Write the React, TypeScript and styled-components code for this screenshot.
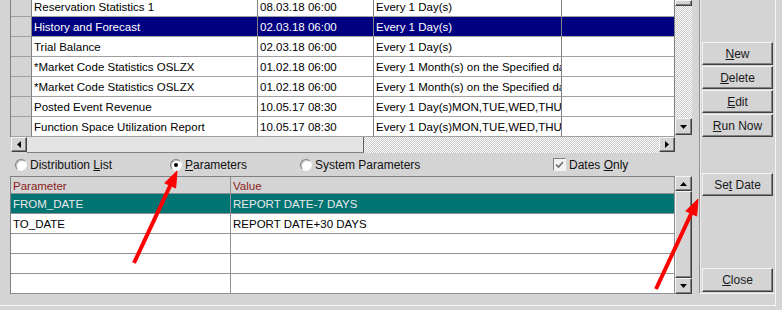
import React from "react";
import styled, { createGlobalStyle, css } from "styled-components";

const GlobalStyle = createGlobalStyle`
  html, body {
    margin: 0;
    padding: 0;
    background: #d4d4d4;
  }
  body {
    font-family: "Liberation Sans", Arial, sans-serif;
    font-size: 12px;
    color: #000;
  }
  * { box-sizing: border-box; }
`;

const raised = css`
  background: #d4d4d4;
  border: 1px solid;
  border-color: #f4f4f4 #404040 #404040 #f4f4f4;
  box-shadow: inset -1px -1px 0 #808080;
`;

const checker = css`
  background: repeating-conic-gradient(#ffffff 0 25%, #c8c8c8 0 50%) 0 0 / 2px 2px;
`;

const Window = styled.div`
  position: relative;
  width: 782px;
  height: 310px;
  overflow: hidden;
  background: #d4d4d4;
`;

const Frame = styled.div`
  display: flex;
  width: 776px;
  height: 306px;
  border-right: 1px solid #f4f4f4;
  border-bottom: 1px solid #f4f4f4;
`;

const Main = styled.div`
  width: 692px;
  padding-left: 10px;
  display: flex;
  flex-direction: column;
`;

const GridArea = styled.div<{ h: number }>`
  display: flex;
  height: ${(p) => p.h}px;
`;

const Rows = styled.div`
  width: 665px;
  height: 100%;
  overflow: hidden;
  border-left: 1px solid #808080;
`;

const RowList = styled.div`
  margin-top: -3px;
`;

const Row = styled.div<{ selected?: boolean }>`
  display: grid;
  grid-template-columns: 21px 226px 116px 188px 113px;
  height: 20px;
  background: ${(p) => (p.selected ? "#000080" : "#ffffff")};
  color: ${(p) => (p.selected ? "#ffffff" : "#000000")};
`;

const Cell = styled.div<{ head?: boolean }>`
  height: 20px;
  padding: 2px 0 0 2px;
  line-height: 17px;
  font-size: 11.5px;
  white-space: nowrap;
  overflow: hidden;
  border-bottom: 1px solid #a0a0a0;
  border-right: 1px solid #808080;
  ${(p) =>
    p.head &&
    css`
      background: #d4d4d4;
    `}
`;

const VScroll = styled.div<{ checkered?: boolean }>`
  width: 17px;
  display: flex;
  flex-direction: column;
  ${(p) => (p.checkered ? checker : "background: #d4d4d4;")}
`;

const Thumb = styled.div<{ h?: number }>`
  ${raised};
  ${(p) => (p.h ? `height: ${p.h}px; flex: none;` : "flex: 1;")}
`;

const Spacer = styled.div`
  flex: 1;
`;

const Gap = styled.div<{ h: number }>`
  height: ${(p) => p.h}px;
  flex: none;
  background: #d4d4d4;
`;

const ArrowBox = styled.div<{ w: number; h: number }>`
  ${raised};
  width: ${(p) => p.w}px;
  height: ${(p) => p.h}px;
  flex: none;
  display: flex;
  align-items: center;
  justify-content: center;
`;

type Dir = "up" | "down" | "left" | "right";

const tri: Record<Dir, string> = {
  up: "0,4 7,4 3.5,0",
  down: "0,0 7,0 3.5,4",
  left: "4,0 4,7 0,3.5",
  right: "0,0 0,7 4,3.5",
};

function ArrowBtn({ dir, w = 17, h = 17 }: { dir: Dir; w?: number; h?: number }) {
  const vertical = dir === "up" || dir === "down";
  return (
    <ArrowBox w={w} h={h}>
      <svg width={vertical ? 7 : 4} height={vertical ? 4 : 7}>
        <polygon points={tri[dir]} fill="#000" />
      </svg>
    </ArrowBox>
  );
}

const HScroll = styled.div`
  display: flex;
  width: 665px;
  height: 16px;
  padding-left: 1px;
`;

const HThumb = styled.div`
  width: 337px;
  background: #e4e4e4;
  border-bottom: 1px solid #808080;
  border-right: 1px solid #606060;
`;

const HTrack = styled.div`
  flex: 1;
  ${checker};
`;

const Options = styled.div`
  display: flex;
  align-items: center;
  height: 23px;
  padding-left: 5px;
`;

const Option = styled.label<{ w?: number }>`
  display: flex;
  align-items: center;
  gap: 3px;
  ${(p) => (p.w ? `width: ${p.w}px;` : "")}
  color: #111;
  white-space: nowrap;
`;

const Radio = styled.span<{ on?: boolean }>`
  width: 12px;
  height: 12px;
  border-radius: 50%;
  background: #ffffff;
  border: 1px solid;
  border-color: #808080 #f4f4f4 #f4f4f4 #808080;
  box-shadow: inset 1px 1px 0 #c0c0c0;
  display: flex;
  align-items: center;
  justify-content: center;
  &::after {
    content: "";
    width: 4px;
    height: 4px;
    border-radius: 50%;
    background: ${(p) => (p.on ? "#000" : "transparent")};
  }
`;

const Check = styled.span`
  width: 13px;
  height: 13px;
  background: #f2f2f2;
  border: 1px solid;
  border-color: #808080 #f4f4f4 #f4f4f4 #808080;
  display: flex;
  align-items: center;
  justify-content: center;
`;

const Table = styled.div`
  width: 665px;
  height: 100%;
  border-left: 1px solid #808080;
  border-top: 1px solid #808080;
  overflow: hidden;
`;

const ParamRow = styled.div<{ head?: boolean; selected?: boolean }>`
  display: grid;
  grid-template-columns: 220px 1fr;
  height: ${(p) => (p.head ? 17 : 20)}px;
  background: ${(p) => (p.head ? "#d4d4d4" : p.selected ? "#007373" : "#ffffff")};
  color: ${(p) => (p.head ? "#8b1c1c" : p.selected ? "#eaeaea" : "#000000")};
`;

const ParamCell = styled.div<{ head?: boolean }>`
  padding: ${(p) => (p.head ? "2px 0 0 2px" : "1px 0 0 2px")};
  line-height: ${(p) => (p.head ? 14 : 18)}px;
  font-size: 11.5px;
  white-space: nowrap;
  overflow: hidden;
  border-bottom: 1px solid #909090;
  border-right: 1px solid #909090;
`;

const SidePanel = styled.div`
  margin-left: 7px;
  width: 76px;
  height: 294px;
  border-left: 1px solid #909090;
  border-bottom: 1px solid #f4f4f4;
  box-shadow: inset 1px 0 0 #ececec;
  padding: 42px 0 1px 2px;
  display: flex;
  flex-direction: column;
  gap: 1px;
`;

const Button = styled.button<{ h?: number; mt?: number | "auto" }>`
  ${raised};
  width: 71px;
  height: ${(p) => p.h ?? 23}px;
  flex: none;
  margin-top: ${(p) => (p.mt === "auto" ? "auto" : `${p.mt ?? 0}px`)};
  padding: 0;
  font-family: "Liberation Sans", Arial, sans-serif;
  font-size: 12px;
  color: #1a1a1a;
  text-align: center;
`;

const Overlay = styled.svg`
  position: absolute;
  top: 0;
  left: 0;
  pointer-events: none;
`;

const reports = [
  ["Reservation Statistics 1", "08.03.18 06:00", "Every 1 Day(s)"],
  ["History and Forecast", "02.03.18 06:00", "Every 1 Day(s)"],
  ["Trial Balance", "02.03.18 06:00", "Every 1 Day(s)"],
  ["*Market Code Statistics OSLZX", "01.02.18 06:00", "Every 1 Month(s) on the Specified day"],
  ["*Market Code Statistics OSLZX", "01.02.18 06:00", "Every 1 Month(s) on the Specified day"],
  ["Posted Event Revenue", "10.05.17 08:30", "Every 1 Day(s)MON,TUE,WED,THU,FRI"],
  ["Function Space Utilization Report", "10.05.17 08:30", "Every 1 Day(s)MON,TUE,WED,THU,FRI"],
];

const params = [
  ["FROM_DATE", "REPORT DATE-7 DAYS"],
  ["TO_DATE", "REPORT DATE+30 DAYS"],
  ["", ""],
  ["", ""],
  ["", ""],
];

function RedArrow({ from, to }: { from: [number, number]; to: [number, number] }) {
  const dx = to[0] - from[0];
  const dy = to[1] - from[1];
  const len = Math.hypot(dx, dy);
  const ux = dx / len;
  const uy = dy / len;
  const bx = to[0] - ux * 16;
  const by = to[1] - uy * 16;
  const nx = -uy * 6;
  const ny = ux * 6;
  return (
    <g fill="#ff0000" stroke="#ff0000">
      <line x1={from[0]} y1={from[1]} x2={bx} y2={by} strokeWidth={4} />
      <polygon
        points={`${to[0]},${to[1]} ${bx + nx},${by + ny} ${bx - nx},${by - ny}`}
        strokeWidth={1}
      />
    </g>
  );
}

export default function App() {
  return (
    <Window>
      <GlobalStyle />
      <Frame>
        <Main>
          <GridArea h={137}>
            <Rows>
              <RowList>
                {reports.map((r, i) => (
                  <Row key={i} selected={i === 1}>
                    <Cell head />
                    <Cell>{r[0]}</Cell>
                    <Cell>{r[1]}</Cell>
                    <Cell>{r[2]}</Cell>
                    <Cell />
                  </Row>
                ))}
              </RowList>
            </Rows>
            <VScroll checkered>
              <Thumb h={6} />
              <Spacer />
              <ArrowBtn dir="down" />
              <Gap h={2} />
            </VScroll>
          </GridArea>
          <HScroll>
            <ArrowBtn dir="left" w={16} h={15} />
            <HThumb />
            <HTrack />
            <ArrowBtn dir="right" w={16} h={15} />
          </HScroll>
          <Options>
            <Option w={155}>
              <Radio />
              <span>
                Distribution <u>L</u>ist
              </span>
            </Option>
            <Option w={130}>
              <Radio on />
              <span>
                <u>P</u>arameters
              </span>
            </Option>
            <Option w={253}>
              <Radio />
              <span>System Parameters</span>
            </Option>
            <Option>
              <Check>
                <svg width="9" height="8" viewBox="0 0 9 8">
                  <path d="M1 3.5 L3.5 6 L8 1" stroke="#6e6e6e" strokeWidth="1.6" fill="none" />
                </svg>
              </Check>
              <span>
                Dates <u>O</u>nly
              </span>
            </Option>
          </Options>
          <GridArea h={118}>
            <Table>
              <ParamRow head>
                <ParamCell head>Parameter</ParamCell>
                <ParamCell head>Value</ParamCell>
              </ParamRow>
              {params.map((p, i) => (
                <ParamRow key={i} selected={i === 0}>
                  <ParamCell>{p[0]}</ParamCell>
                  <ParamCell>{p[1]}</ParamCell>
                </ParamRow>
              ))}
            </Table>
            <VScroll>
              <ArrowBtn dir="up" h={15} />
              <Thumb />
              <ArrowBtn dir="down" h={16} />
            </VScroll>
          </GridArea>
        </Main>
        <SidePanel>
          <Button>
            <u>N</u>ew
          </Button>
          <Button>
            <u>D</u>elete
          </Button>
          <Button>
            <u>E</u>dit
          </Button>
          <Button>
            <u>R</u>un Now
          </Button>
          <Button mt={35}>
            Se<u>t</u> Date
          </Button>
          <Button h={24} mt="auto">
            <u>C</u>lose
          </Button>
        </SidePanel>
      </Frame>
      <Overlay width={782} height={310}>
        <RedArrow from={[134, 263]} to={[177, 171]} />
        <RedArrow from={[656, 289]} to={[698, 199]} />
      </Overlay>
    </Window>
  );
}
